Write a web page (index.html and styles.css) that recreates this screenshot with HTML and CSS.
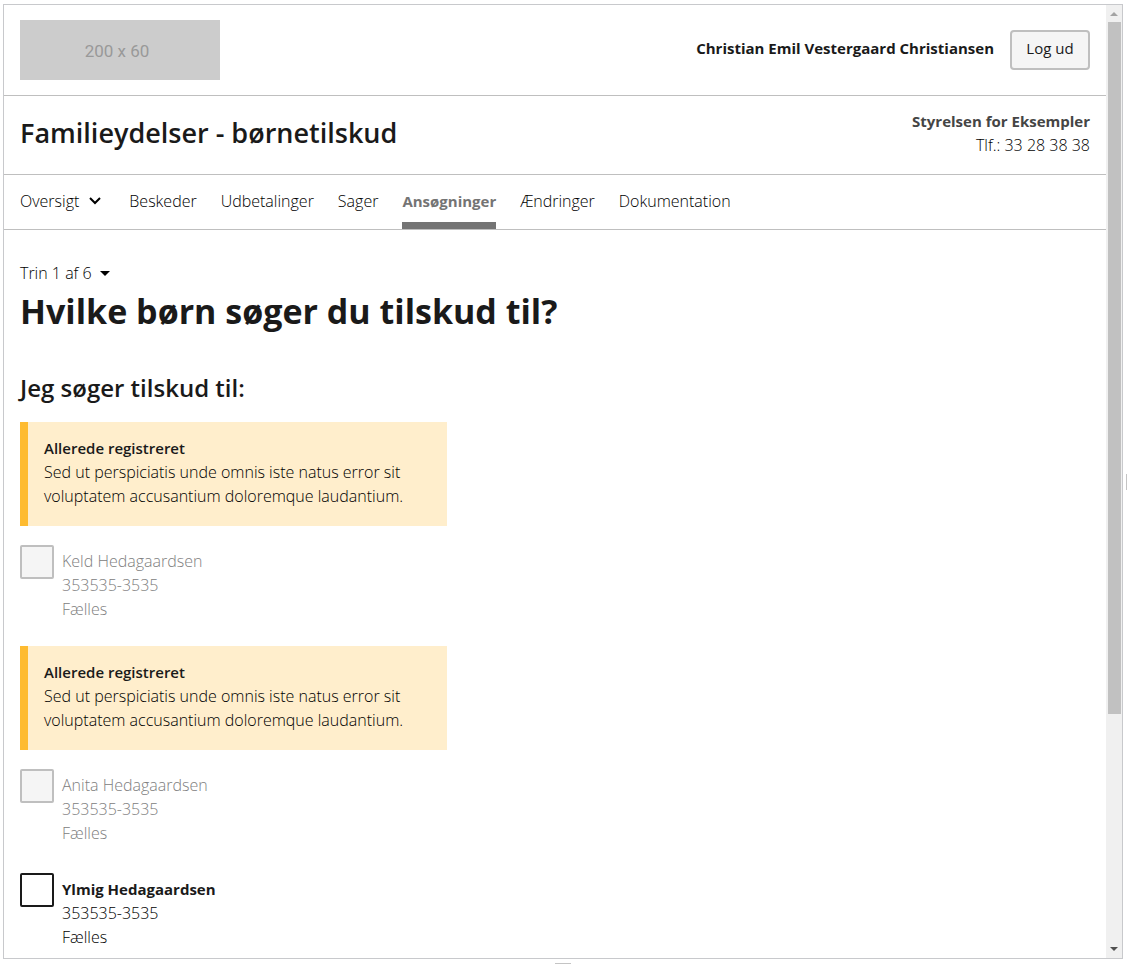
FILE: index.html
```html
<!DOCTYPE html>
<html lang="da">
<head>
<meta charset="utf-8">
<title>Familieydelser - børnetilskud</title>
<link rel="stylesheet" href="styles.css">
</head>
<body>
<div class="stage">
  <div class="frame">
    <div class="page">
      <header>
        <div class="bar portal">
          <div class="logo">200 x 60</div>
          <div class="user">
            <span class="user-name">Christian Emil Vestergaard Christiansen</span>
            <button class="logout" type="button">Log ud</button>
          </div>
        </div>
        <div class="bar solution">
          <div class="solution-title">Familieydelser - børnetilskud</div>
          <div class="authority">
            <strong>Styrelsen for Eksempler</strong>
            <span>Tlf.: 33 28 38 38</span>
          </div>
        </div>
        <nav class="bar nav">
          <button class="nav-item" type="button">Oversigt
            <svg class="chevron" viewBox="0 0 12 8" aria-hidden="true"><path d="M1 1l5 5 5-5" fill="none" stroke="#000" stroke-width="2"/></svg>
          </button>
          <a class="nav-item" href="#">Beskeder</a>
          <a class="nav-item" href="#">Udbetalinger</a>
          <a class="nav-item" href="#">Sager</a>
          <a class="nav-item current" href="#" aria-current="page">Ansøgninger</a>
          <a class="nav-item" href="#">Ændringer</a>
          <a class="nav-item" href="#">Dokumentation</a>
        </nav>
      </header>
      <main class="content">
        <button class="step" type="button">Trin 1 af 6
          <svg class="caret" viewBox="0 0 10 5" aria-hidden="true"><path d="M0 0h10L5 5z"/></svg>
        </button>
        <h1>Hvilke børn søger du tilskud til?</h1>
        <h2>Jeg søger tilskud til:</h2>
        <ul class="children">
          <li>
            <div class="alert">
              <p class="alert-title">Allerede registreret</p>
              <p>Sed ut perspiciatis unde omnis iste natus error sit voluptatem accusantium doloremque laudantium.</p>
            </div>
            <div class="check">
              <input type="checkbox" id="child-1" disabled>
              <label for="child-1"><span>Keld Hedagaardsen</span><span>353535-3535</span><span>Fælles</span></label>
            </div>
          </li>
          <li>
            <div class="alert">
              <p class="alert-title">Allerede registreret</p>
              <p>Sed ut perspiciatis unde omnis iste natus error sit voluptatem accusantium doloremque laudantium.</p>
            </div>
            <div class="check">
              <input type="checkbox" id="child-2" disabled>
              <label for="child-2"><span>Anita Hedagaardsen</span><span>353535-3535</span><span>Fælles</span></label>
            </div>
          </li>
          <li>
            <div class="check">
              <input type="checkbox" id="child-3">
              <label for="child-3"><strong>Ylmig Hedagaardsen</strong><span>353535-3535</span><span>Fælles</span></label>
            </div>
          </li>
        </ul>
      </main>
    </div>
    <div class="scrollbar" aria-hidden="true">
      <svg class="arrow" viewBox="0 0 16 17"><path d="M4 11h8L8 7z" fill="#a3a3a3"/></svg>
      <div class="track"><div class="thumb"></div></div>
      <svg class="arrow" viewBox="0 0 16 17"><path d="M4 6h8l-4 4z" fill="#505050"/></svg>
    </div>
  </div>
  <div class="handle-right"></div>
  <div class="handle-bottom"></div>
</div>
</body>
</html>
```
FILE: styles.css
```css
* {
  box-sizing: border-box;
}

body {
  margin: 0;
  background: #fff;
  color: #000;
  font: 300 16px/24px "Open Sans", "Noto Sans", sans-serif;
}

h1, h2, p, ul {
  margin: 0;
  padding: 0;
}

button {
  font: inherit;
  color: inherit;
  cursor: pointer;
}

/* Resizable preview frame */
.stage {
  display: grid;
  grid-template: minmax(0, 1fr) 5px / minmax(0, 1fr) 4px;
  height: 100vh;
  padding: 4px 0 0 3px;
}

.frame {
  display: flex;
  border: 1px solid #c8c9cc;
  overflow: hidden;
}

.page {
  flex: 1;
  min-width: 0;
  overflow: hidden;
}

.handle-right {
  place-self: center end;
  width: 1px;
  height: 16px;
  background: #c4c4c4;
}

.handle-bottom {
  place-self: end center;
  width: 16px;
  height: 1px;
  background: #c4c4c4;
}

.scrollbar {
  display: flex;
  flex-direction: column;
  width: 16px;
  background: #f0f0f0;
}

.arrow {
  height: 17px;
}

.track {
  flex: 1;
  padding: 0 1px 0 2px;
}

.thumb {
  height: 75.3%;
  background: #c1c1c1;
}

/* Header */
.bar {
  display: flex;
  padding: 0 16px;
  border-bottom: 1px solid #bfbfbf;
}

.portal {
  justify-content: space-between;
  align-items: center;
  padding: 15px 16px;
}

.logo {
  display: grid;
  place-items: center;
  width: 200px;
  height: 60px;
  padding: 2px 6px 0 0;
  background: #ccc;
  color: #999;
  font: 400 17px/24px Roboto, "Liberation Sans", sans-serif;
}

.user {
  display: flex;
  gap: 16px;
}

.user-name {
  padding-top: 6px;
  color: #1a1a1a;
  font-size: 15px;
  font-weight: 700;
}

.logout {
  width: 80px;
  height: 40px;
  padding: 0 0 4px;
  border: 2px solid #bfbfbf;
  border-radius: 4px;
  background: #f5f5f5;
  color: #1a1a1a;
  font-size: 15px;
  font-weight: 400;
}

.solution {
  justify-content: space-between;
  align-items: center;
  padding: 13px 16px 17px;
}

.solution-title {
  color: #1a1a1a;
  font-size: 27px;
  font-weight: 600;
  line-height: 48px;
}

.authority {
  display: grid;
  text-align: right;
}

.authority strong {
  color: #454545;
  font-size: 15px;
  font-weight: 700;
}

.nav {
  gap: 24px;
}

.nav-item {
  display: flex;
  align-items: center;
  gap: 8px;
  padding: 14px 0 9px;
  border: 0;
  border-bottom: 7px solid transparent;
  background: none;
  color: inherit;
  text-decoration: none;
}

.nav button {
  gap: 10px;
  padding-right: 4px;
}

.nav .current {
  border-color: #747474;
  color: #747474;
  font-size: 15px;
  font-weight: 700;
}

.chevron {
  width: 12px;
  height: 8px;
}

/* Content */
.content {
  padding: 31px 16px;
}

.step {
  display: flex;
  align-items: center;
  gap: 8px;
  padding: 0;
  border: 0;
  background: none;
}

.caret {
  width: 10px;
  height: 5px;
}

h1 {
  margin-top: 2px;
  color: #1a1a1a;
  font-size: 34px;
  font-weight: 700;
  line-height: 48px;
}

h2 {
  margin: 37px 0 18px;
  color: #1a1a1a;
  font-size: 24px;
  font-weight: 600;
  line-height: 32px;
}

.children {
  display: grid;
  gap: 25px;
  list-style: none;
}

.alert {
  max-width: 427px;
  margin-bottom: 16px;
  padding: 14px 16px 18px;
  border-left: 8px solid #febb30;
  background: #ffeecc;
}

.alert-title {
  color: #1a1a1a;
  font-size: 15px;
  font-weight: 600;
}

.check {
  display: flex;
  gap: 8px;
  padding-top: 3px;
}

.check input {
  appearance: none;
  width: 34px;
  height: 34px;
  margin: 0;
  border: 2px solid #1a1a1a;
  border-radius: 2px;
  background: #fff;
}

.check label {
  display: grid;
  padding-top: 4px;
}

.check strong {
  color: #1a1a1a;
  font-size: 15px;
  font-weight: 700;
}

.check input:disabled {
  border-color: #bfbfbf;
  background: #f5f5f5;
}

.check input:disabled + label {
  color: #808080;
}
```
